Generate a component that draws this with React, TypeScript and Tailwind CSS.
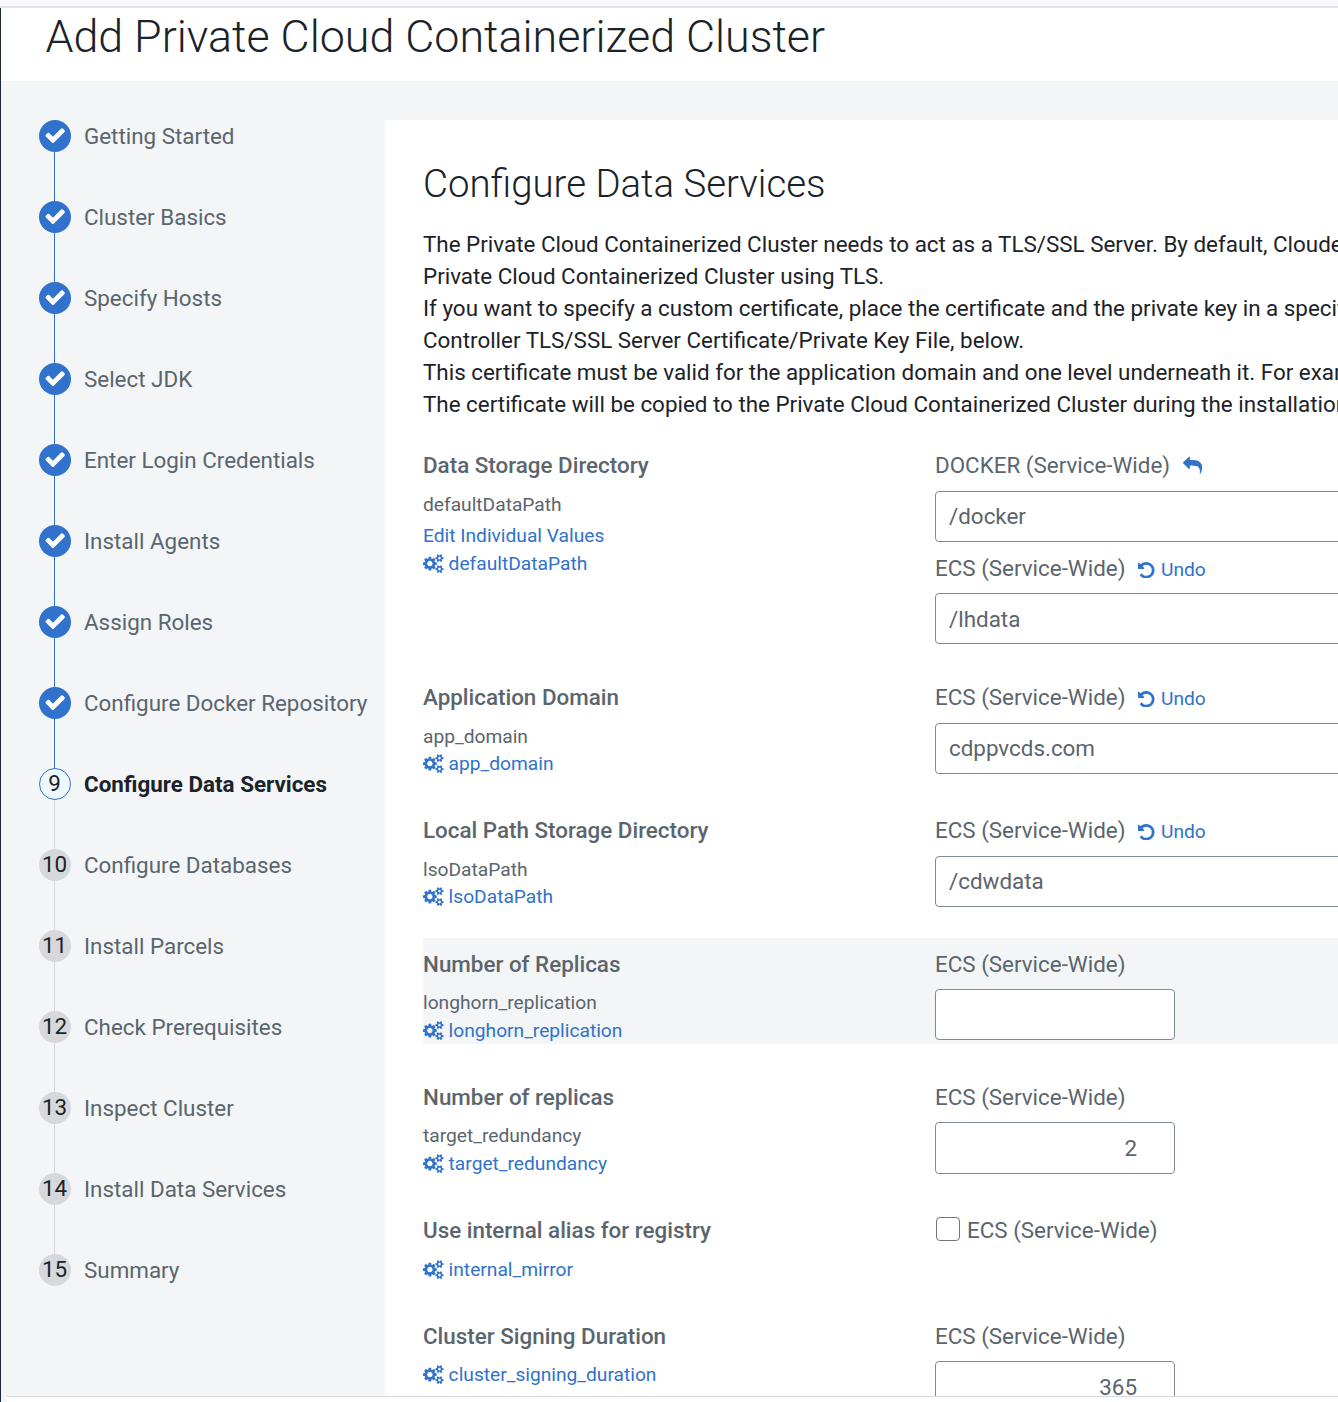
import React from "react";

const steps = [
  "Getting Started", "Cluster Basics", "Specify Hosts", "Select JDK", "Enter Login Credentials",
  "Install Agents", "Assign Roles", "Configure Docker Repository", "Configure Data Services",
  "Configure Databases", "Install Parcels", "Check Prerequisites", "Inspect Cluster",
  "Install Data Services", "Summary",
];

const CURRENT = 8;

function CheckIcon() {
  return (
    <svg className="mr-[0.5px] mb-px size-[22.4px] shrink-0" viewBox="0 0 1792 1792" fill="currentColor">
      <path d="M1671 566q0 40-28 68l-724 724-136 136q-28 28-68 28t-68-28l-136-136-362-362q-28-28-28-68t28-68l136-136q28-28 68-28t68 28l294 295 656-657q28-28 68-28t68 28l136 136q28 28 28 68z" />
    </svg>
  );
}

function ReplyIcon() {
  return (
    <svg className="ml-[13px] size-[19.2px] shrink-0 text-[#3072cc]" viewBox="0 0 1792 1792" fill="currentColor">
      <path d="M1792 1120q0 166-127 451-3 7-10.5 24t-13.5 30-13 22q-12 17-28 17-15 0-23.5-10t-8.5-25q0-9 2.5-26.5t2.5-23.5q5-68 5-123 0-101-17.5-181t-48.5-138.5-80-101-105.5-69.5-133-42.5-154-21.5-175.5-6h-224v256q0 26-19 45t-45 19-45-19l-512-512q-19-19-19-45t19-45l512-512q19-19 45-19t45 19 19 45v256h224q713 0 875 403 53 134 53 333z" />
    </svg>
  );
}

function UndoIcon() {
  return (
    <svg className="size-[16.5px] shrink-0" viewBox="0 0 1536 1536" fill="currentColor">
      <path d="M1536 768q0 156-61 298t-164 245-245 164-298 61q-172 0-327-72.5t-264-204.5q-7-10-6.5-22.5t8.5-20.5l137-138q10-9 25-9 16 2 23 12 73 95 179 147t225 52q104 0 198.5-40.5t163.5-109.5 109.5-163.5 40.5-198.5-40.5-198.5-109.5-163.5-163.5-109.5-198.5-40.5q-98 0-188 35.5t-160 101.5l137 138q31 30 14 69-17 40-59 40h-448q-26 0-45-19t-19-45v-448q0-42 40-59 39-17 69 14l130 129q107-101 244.5-156.5t284.5-55.5q156 0 298 61t245 164 164 245 61 298z" />
    </svg>
  );
}

function CogsIcon() {
  return (
    <svg className="h-[19.2px] w-[20.6px] shrink-0" viewBox="0 0 1920 1792" fill="currentColor">
      <path d="M896 896q0-106-75-181t-181-75-181 75-75 181 75 181 181 75 181-75 75-181zm768 512q0-52-38-90t-90-38-90 38-38 90q0 53 37.5 90.5t90.5 37.5 90.5-37.5 37.5-90.5zm0-1024q0-52-38-90t-90-38-90 38-38 90q0 53 37.5 90.5t90.5 37.5 90.5-37.5 37.5-90.5zm-384 421v185q0 10-7 19.5t-16 10.5l-155 24q-11 35-32 76 34 48 90 115 7 11 7 20 0 12-7 19-23 30-82.5 89.5t-78.5 59.5q-11 0-21-7l-115-90q-37 19-77 31-11 108-23 155-7 24-30 24h-186q-11 0-20-7.5t-10-17.5l-23-153q-34-10-75-31l-118 89q-7 7-20 7-11 0-21-8-144-133-144-160 0-9 7-19 10-14 41-53t47-61q-23-44-35-82l-152-24q-10-1-17-9.5t-7-19.5v-185q0-10 7-19.5t16-10.5l155-24q11-35 32-76-34-48-90-115-7-11-7-20 0-12 7-20 22-30 82-89t79-59q11 0 21 7l115 90q34-18 77-32 11-108 23-154 7-24 30-24h186q11 0 20 7.5t10 17.5l23 153q34 10 75 31l118-89q8-7 20-7 11 0 21 8 144 133 144 160 0 8-7 19-12 16-42 54t-45 60q23 48 34 82l152 23q10 2 17 10.5t7 19.5zm640 533v140q0 16-149 31-12 27-30 52 51 113 51 138 0 4-4 7-122 71-124 71-8 0-46-47t-52-68q-20 2-30 2t-30-2q-14 21-52 68t-46 47q-2 0-124-71-4-3-4-7 0-25 51-138-18-25-30-52-149-15-149-31v-140q0-16 149-31 13-29 30-52-51-113-51-138 0-4 4-7 4-2 35-20t59-34 30-16q8 0 46 46.5t52 67.5q20-2 30-2t30 2q51-71 92-112l6-2q4 0 124 70 4 3 4 7 0 25-51 138 17 23 30 52 149 15 149 31zm0-1024v140q0 16-149 31-12 27-30 52 51 113 51 138 0 4-4 7-122 71-124 71-8 0-46-47t-52-68q-20 2-30 2t-30-2q-14 21-52 68t-46 47q-2 0-124-71-4-3-4-7 0-25 51-138-18-25-30-52-149-15-149-31v-140q0-16 149-31 13-29 30-52-51-113-51-138 0-4 4-7 4-2 35-20t59-34 30-16q8 0 46 46.5t52 67.5q20-2 30-2t30 2q51-71 92-112l6-2q4 0 124 70 4 3 4 7 0 25-51 138 17 23 30 52 149 15 149 31z" />
    </svg>
  );
}

function Step({ index, label }: { index: number; label: string }) {
  const done = index < CURRENT;
  const current = index === CURRENT;
  const last = index === steps.length - 1;
  return (
    <li className="flex h-[81px] gap-[13px]">
      <div className="flex w-8 flex-col items-center">
        {done ? (
          <span className="flex size-8 shrink-0 items-center justify-center rounded-full bg-[#3072cc] text-white">
            <CheckIcon />
          </span>
        ) : current ? (
          <span className="flex size-8 shrink-0 items-center justify-center rounded-full border border-[#3072cc] bg-[#f0f8ff] pr-px pb-px leading-none text-[#1b2329]">{index + 1}</span>
        ) : (
          <span className="flex size-8 shrink-0 items-center justify-center rounded-full bg-[#d6d8db] pr-px pb-px leading-none text-[#1b2329]">{index + 1}</span>
        )}
        {!last && <span className={done ? "mr-px w-px flex-1 bg-[#3072cc]" : "mr-px w-px flex-1 bg-[#d6d8db]"} />}
      </div>
      <span className={current ? "h-8 whitespace-nowrap leading-[33px] font-bold text-[#1b2329]" : "h-8 whitespace-nowrap leading-[33px] text-[#5a656d]"}>{label}</span>
    </li>
  );
}

function Undo() {
  return (
    <span className="ml-[13px] flex items-center gap-[6px] pt-[2px] text-[19.2px] text-[#3072cc]">
      <UndoIcon />
      Undo
    </span>
  );
}

function Label({ children, action }: { children: string; action?: React.ReactNode }) {
  return (
    <div className="flex h-8 items-center pt-[2px] whitespace-nowrap">
      {children}
      {action}
    </div>
  );
}

function WideInput({ value, className = "pt-0" }: { value: string; className?: string }) {
  return <div className={`flex h-[51px] w-[600px] items-center rounded-[4px] border border-[#808a91] bg-white px-[13px] ${className}`}>{value}</div>;
}

function NumberInput({ value }: { value: string }) {
  return <div className={value ? "flex h-[52px] w-60 items-center justify-end rounded-[4px] border border-[#808a91] bg-white pt-px pr-[37px]" : "h-[51px] w-60 rounded-[4px] border border-[#808a91] bg-white"}>{value}</div>;
}

function Row({ title, name, link, edit, className, nameClass = "leading-[28px]", metaClass = "pt-[9px]", children }: { title: string; name?: string; link: string; edit?: boolean; className: string; nameClass?: string; metaClass?: string; children: React.ReactNode }) {
  return (
    <section className={className}>
      <div className="w-[512px] shrink-0 text-[19.2px]">
        <h3 className="h-8 text-[22.4px] leading-[33px] font-medium">{title}</h3>
        <div className={`flex flex-col ${metaClass}`}>
          {name && <div className={`h-[28px] ${nameClass}`}>{name}</div>}
          {edit && <div className="mt-[3px] h-[28px] leading-[28px] text-[#3072cc]">Edit Individual Values</div>}
          <div className="flex h-[28px] items-center gap-[5px] leading-[28px] text-[#3072cc]">
            <CogsIcon />
            {link}
          </div>
        </div>
      </div>
      <div>{children}</div>
    </section>
  );
}

export default function App() {
  return (
    <div className="flex h-[1402px] w-[1338px] flex-col overflow-hidden bg-white font-['Roboto',sans-serif] text-[22.4px] text-[#5a656d]">
      <div className="h-2 shrink-0 border-b-2 border-[#dee2eb] bg-[#f9f9fe]" />
      <div className="flex h-[1394px] flex-col border-l border-[#1b2b36]">
        <header className="h-[73px] shrink-0 pl-[44.4px] text-[44.8px] leading-[58px] font-light text-[#1b2329]">
          <h1 className="whitespace-nowrap">Add Private Cloud Containerized Cluster</h1>
        </header>
        <div className="flex h-[1315px] shrink-0 overflow-hidden bg-[#f3f5f7] pt-[39px]">
          <ol className="w-[384px] shrink-0 pl-[38px]">
            {steps.map((s, i) => <Step key={s} index={i} label={s} />)}
          </ol>
          <main className="h-[1276px] w-[953px] shrink-0 overflow-hidden bg-white pl-[38px]">
            <h2 className="pt-[37px] text-[38.4px] leading-[54px] font-light text-[#1b2329]">Configure Data Services</h2>
            <div className="mt-[17px] leading-8 whitespace-nowrap text-[#1b2329]">
              <p>The Private Cloud Containerized Cluster needs to act as a TLS/SSL Server. By default, Cloudera</p>
              <p>Private Cloud Containerized Cluster using TLS.</p>
              <p>If you want to specify a custom certificate, place the certificate and the private key in a specific</p>
              <p>Controller TLS/SSL Server Certificate/Private Key File, below.</p>
              <p>This certificate must be valid for the application domain and one level underneath it. For example</p>
              <p>The certificate will be copied to the Private Cloud Containerized Cluster during the installation.</p>
            </div>
            <div className="pt-[29px]">
              <Row className="flex h-[232px]" metaClass="pt-[10px]" title="Data Storage Directory" name="defaultDataPath" link="defaultDataPath" edit>
                <Label action={<ReplyIcon />}>DOCKER (Service-Wide)</Label>
                <div className="pt-[10px]"><WideInput value="/docker" /></div>
                <div className="pt-[10px]"><Label action={<Undo />}>ECS (Service-Wide)</Label></div>
                <div className="pt-[9px]"><WideInput value="/lhdata" className="pt-[2px]" /></div>
              </Row>
              <Row className="flex h-[133px]" nameClass="leading-[30px]" title="Application Domain" name="app_domain" link="app_domain">
                <Label action={<Undo />}>ECS (Service-Wide)</Label>
                <div className="pt-[10px]"><WideInput value="cdppvcds.com" /></div>
              </Row>
              <Row className="flex h-[124px]" nameClass="leading-[30px]" title="Local Path Storage Directory" name="lsoDataPath" link="lsoDataPath">
                <Label action={<Undo />}>ECS (Service-Wide)</Label>
                <div className="pt-[10px]"><WideInput value="/cdwdata" /></div>
              </Row>
              <Row className="flex h-[106px] bg-[#f3f5f7] pt-[10px]" title="Number of Replicas" name="longhorn_replication" link="longhorn_replication">
                <Label>ECS (Service-Wide)</Label>
                <div className="pt-[9px]"><NumberInput value="" /></div>
              </Row>
              <Row className="flex h-[170px] pt-[37px]" title="Number of replicas" name="target_redundancy" link="target_redundancy">
                <Label>ECS (Service-Wide)</Label>
                <div className="pt-[9px]"><NumberInput value="2" /></div>
              </Row>
              <Row className="flex h-[106px]" metaClass="pt-[10px]" title="Use internal alias for registry" link="internal_mirror">
                <div className="flex h-8 items-center pt-[2px]">
                  <span className="mr-[7px] mb-[4px] ml-px size-6 rounded-[4px] border-[1.5px] border-[#767676] bg-white" />
                  ECS (Service-Wide)
                </div>
              </Row>
              <Row className="flex h-[106px]" title="Cluster Signing Duration" link="cluster_signing_duration">
                <Label>ECS (Service-Wide)</Label>
                <div className="pt-[9px]"><NumberInput value="365" /></div>
              </Row>
            </div>
          </main>
        </div>
        <div className="flex h-[6px] shrink-0 bg-[#f3f5f7] pl-[6px]">
          <div className="flex-1 border-t border-[#d6d8db] bg-white" />
        </div>
      </div>
    </div>
  );
}
